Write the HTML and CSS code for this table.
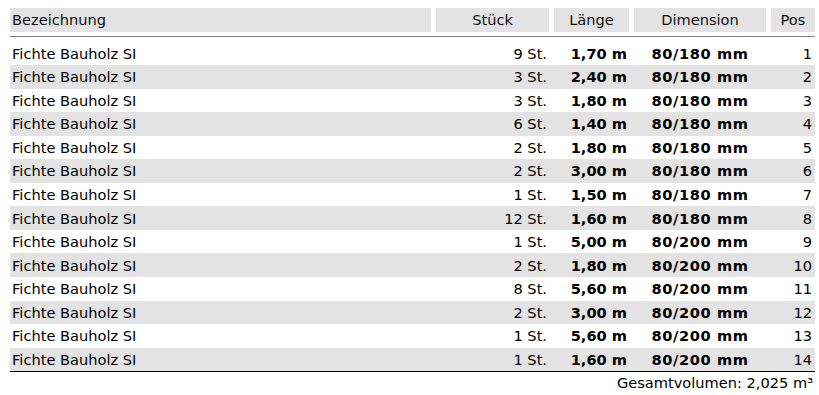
FILE: index.html
```html
<!DOCTYPE html>
<html lang="de">
<head>
<meta charset="utf-8">
<title>Holzliste</title>
<link rel="stylesheet" href="styles.css">
</head>
<body>
<div class="list">
  <div class="head">
    <div class="hc name">Bezeichnung</div>
    <div class="hc">Stück</div>
    <div class="hc">Länge</div>
    <div class="hc">Dimension</div>
    <div class="hc">Pos</div>
  </div>
  <div class="body">
    <div class="row"><span class="c-name">Fichte Bauholz SI</span><span class="c-qty">9 St.</span><span class="c-len">1,70 m</span><span class="c-dim">80/180 mm</span><span class="c-pos">1</span></div>
    <div class="row"><span class="c-name">Fichte Bauholz SI</span><span class="c-qty">3 St.</span><span class="c-len">2,40 m</span><span class="c-dim">80/180 mm</span><span class="c-pos">2</span></div>
    <div class="row"><span class="c-name">Fichte Bauholz SI</span><span class="c-qty">3 St.</span><span class="c-len">1,80 m</span><span class="c-dim">80/180 mm</span><span class="c-pos">3</span></div>
    <div class="row"><span class="c-name">Fichte Bauholz SI</span><span class="c-qty">6 St.</span><span class="c-len">1,40 m</span><span class="c-dim">80/180 mm</span><span class="c-pos">4</span></div>
    <div class="row"><span class="c-name">Fichte Bauholz SI</span><span class="c-qty">2 St.</span><span class="c-len">1,80 m</span><span class="c-dim">80/180 mm</span><span class="c-pos">5</span></div>
    <div class="row"><span class="c-name">Fichte Bauholz SI</span><span class="c-qty">2 St.</span><span class="c-len">3,00 m</span><span class="c-dim">80/180 mm</span><span class="c-pos">6</span></div>
    <div class="row"><span class="c-name">Fichte Bauholz SI</span><span class="c-qty">1 St.</span><span class="c-len">1,50 m</span><span class="c-dim">80/180 mm</span><span class="c-pos">7</span></div>
    <div class="row"><span class="c-name">Fichte Bauholz SI</span><span class="c-qty">12 St.</span><span class="c-len">1,60 m</span><span class="c-dim">80/180 mm</span><span class="c-pos">8</span></div>
    <div class="row"><span class="c-name">Fichte Bauholz SI</span><span class="c-qty">1 St.</span><span class="c-len">5,00 m</span><span class="c-dim">80/200 mm</span><span class="c-pos">9</span></div>
    <div class="row"><span class="c-name">Fichte Bauholz SI</span><span class="c-qty">2 St.</span><span class="c-len">1,80 m</span><span class="c-dim">80/200 mm</span><span class="c-pos">10</span></div>
    <div class="row"><span class="c-name">Fichte Bauholz SI</span><span class="c-qty">8 St.</span><span class="c-len">5,60 m</span><span class="c-dim">80/200 mm</span><span class="c-pos">11</span></div>
    <div class="row"><span class="c-name">Fichte Bauholz SI</span><span class="c-qty">2 St.</span><span class="c-len">3,00 m</span><span class="c-dim">80/200 mm</span><span class="c-pos">12</span></div>
    <div class="row"><span class="c-name">Fichte Bauholz SI</span><span class="c-qty">1 St.</span><span class="c-len">5,60 m</span><span class="c-dim">80/200 mm</span><span class="c-pos">13</span></div>
    <div class="row"><span class="c-name">Fichte Bauholz SI</span><span class="c-qty">1 St.</span><span class="c-len">1,60 m</span><span class="c-dim">80/200 mm</span><span class="c-pos">14</span></div>
  </div>
  <div class="total">Gesamtvolumen: 2,025 m³</div>
</div>
</body>
</html>
```
FILE: styles.css
```css
html, body {
  margin: 0;
  padding: 0;
  background: #ffffff;
}
body {
  font-family: "DejaVu Sans", Verdana, sans-serif;
  font-size: 14.6px;
  color: #000;
}
.list {
  width: 805px;
  margin-left: 10px;
  padding-top: 8px;
}
.head,
.row {
  display: grid;
  grid-template-columns: 421px 113px 75px 132px 44px;
  column-gap: 5px;
}
.head {
  height: 24px;
  border-bottom: 1px solid #808080;
  padding-bottom: 4px;
}
.hc {
  background: #e3e3e3;
  display: flex;
  align-items: center;
  justify-content: center;
  line-height: 24px;
  white-space: nowrap;
  color: #111;
}
.hc.name {
  justify-content: flex-start;
  padding-left: 2px;
}
.body {
  padding-top: 4.4px;
  border-bottom: 1px solid #000;
}
.row {
  height: 23.57px;
  align-items: center;
  white-space: nowrap;
}
.row:nth-child(even) {
  background: #e3e3e3;
}
.c-name {
  padding-left: 2px;
}
.c-qty {
  text-align: right;
  padding-right: 2px;
}
.c-len {
  text-align: right;
  padding-right: 2px;
  font-weight: bold;
}
.c-dim {
  text-align: center;
  font-weight: bold;
  letter-spacing: 0.6px;
}
.c-pos {
  text-align: right;
  padding-right: 3px;
}
.total {
  text-align: right;
  padding-right: 2px;
  line-height: 21px;
}
```
